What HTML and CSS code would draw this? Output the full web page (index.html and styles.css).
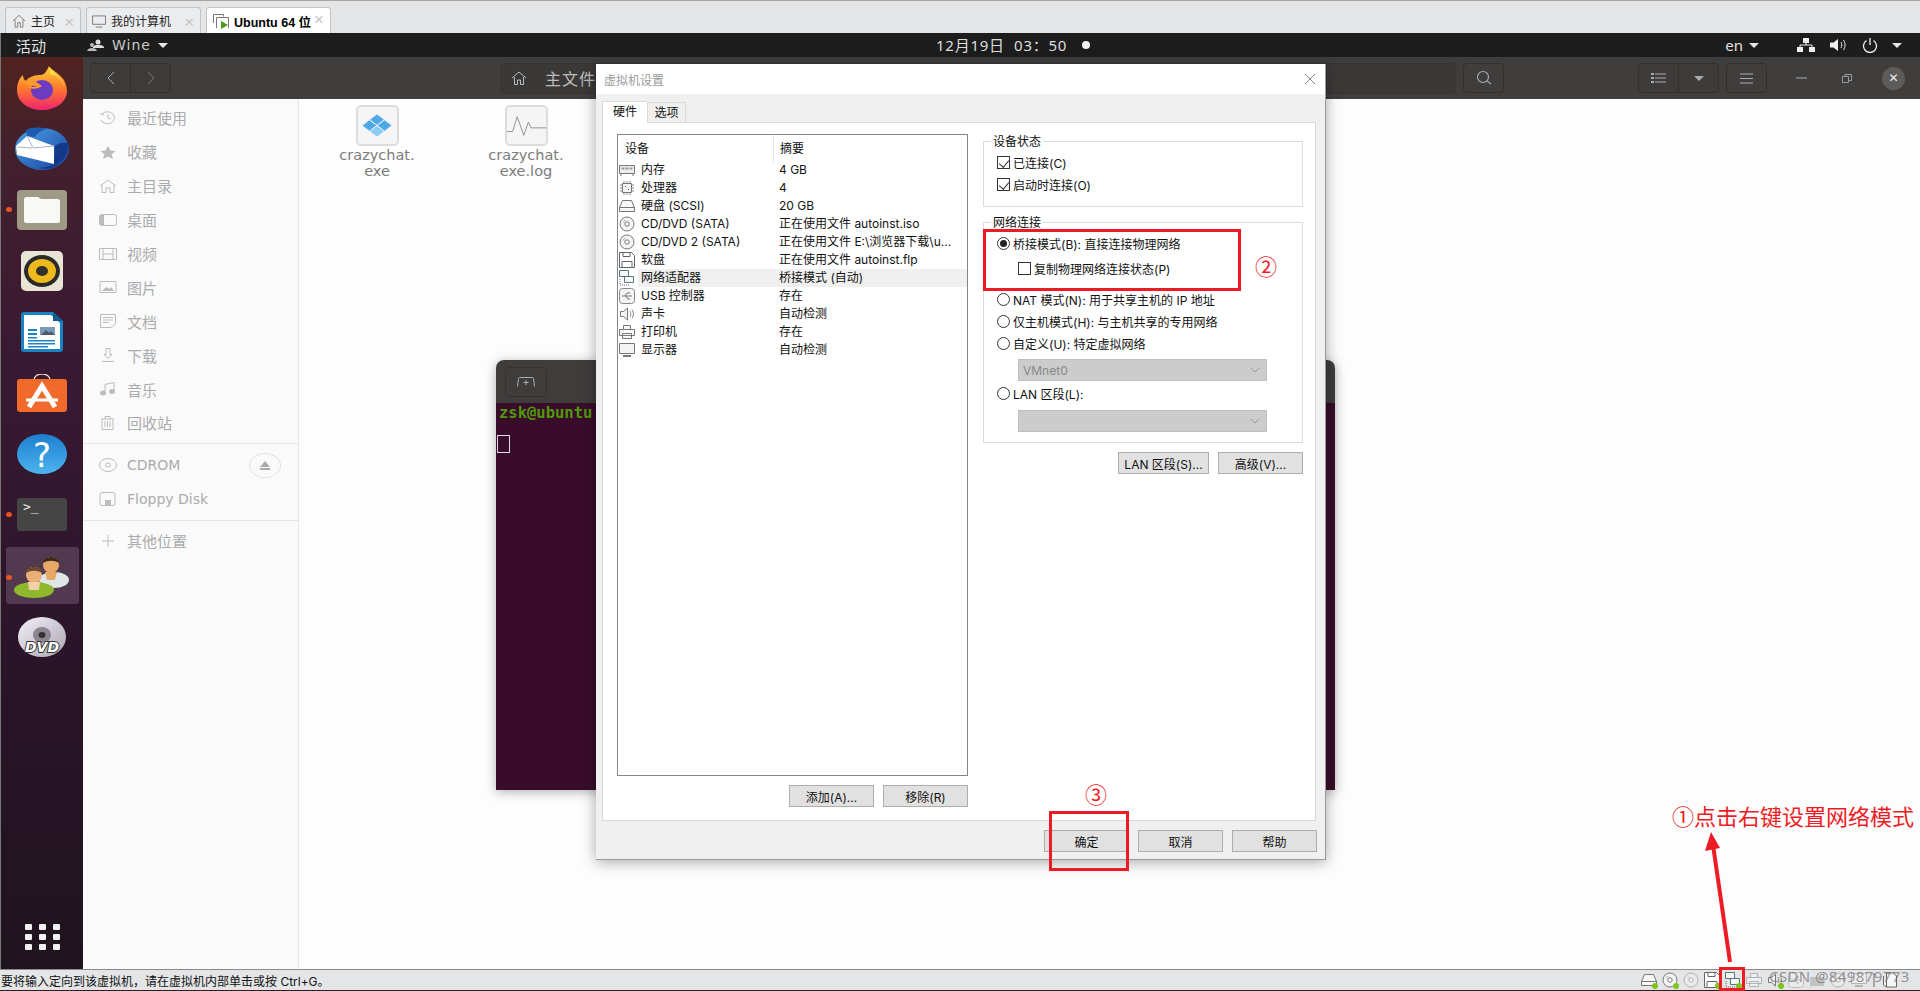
FILE: index.html
```html
<!DOCTYPE html>
<html lang="zh">
  <head>
    <meta charset="UTF-8" />
    <title>Ubuntu 64 位</title>
    <link rel="stylesheet" href="styles.css">
  </head>
  <body>
    <!-- iconos repetidos -->
    <svg class="defs" width="0" height="0">
      <symbol id="i-mem" viewBox="0 0 16 16"><path d="M.5 3.5h15v8H.5zM2 12v2M14 12v2" fill="#eee" stroke="#777"/><path d="M2.5 5.5h3v2h-3zM6.5 5.5h3v2h-3zM10.5 5.5h3v2h-3z" fill="#999"/></symbol>
      <symbol id="i-cpu" viewBox="0 0 16 16"><path d="M3.5 3.5h9v9h-9z" fill="#f4f4f4" stroke="#777"/><path d="M5 1v2M8 1v2M11 1v2M5 13v2M8 13v2M11 13v2M1 5h2M1 8h2M1 11h2M13 5h2M13 8h2M13 11h2" stroke="#888"/><path d="M6 6h1v1H6zM9 9h1v1H9z" fill="#555"/></symbol>
      <symbol id="i-disk" viewBox="0 0 16 16"><path d="M3.5 2.5h9l3 7v4H.5v-4z" fill="#f7f7f7" stroke="#777"/><path d="M.5 9.5h15" stroke="#777"/></symbol>
      <symbol id="i-cd" viewBox="0 0 16 16"><circle cx="8" cy="8" r="7" fill="#f4f4f4" stroke="#777"/><circle cx="8" cy="8" r="2.2" fill="#fff" stroke="#777"/><path d="M4 6.5 6 4" stroke="#aaa"/></symbol>
      <symbol id="i-floppy" viewBox="0 0 16 16"><path d="M.5.5h12l3 3v12H.5z" fill="#fff" stroke="#666"/><path d="M4 .5v4h7v-4M3 15.5v-6h10v6" fill="none" stroke="#666"/></symbol>
      <symbol id="i-net" viewBox="0 0 16 16"><path d="M.5.5h9v6h-9zM5.500 6.500h9v6h-9z" fill="#f6f6f6" stroke="#577"/><path d="M1 9v6h9" fill="none" stroke="#666" stroke-dasharray="1 1"/></symbol>
      <symbol id="i-usb" viewBox="0 0 16 16"><rect x=".5" y=".5" width="15" height="15" rx="3" fill="#f4f4f4" stroke="#888"/><path d="M3 8h10M6 8l2-3h3M7 8l2 3h2" fill="none" stroke="#777"/></symbol>
      <symbol id="i-sound" viewBox="0 0 16 16"><path d="M1.500 5.500h3l4-3.500v12l-4-3.500h-3z" fill="#f4f4f4" stroke="#777"/><path d="M11 5c1 2 1 4 0 6M13 3.500c2 3 2 6 0 9" fill="none" stroke="#888"/></symbol>
      <symbol id="i-print" viewBox="0 0 16 16"><path d="M4.500 1.500h7v4h-7zM.5 5.500h15v6h-15zM3.500 9.500h9v5h-9z" fill="#fafafa" stroke="#777"/></symbol>
      <symbol id="i-mon" viewBox="0 0 16 16"><path d="M.5 1.500h15v10H.5z" fill="#f4f4f4" stroke="#777"/><path d="M4 14h8" stroke="#777" stroke-width="2"/></symbol>
    </svg>

    <div class="screen">
      <!-- pestañas del programa -->
      <div class="tabstrip">
        <div class="hosttab tab-home">
          <svg width="14" height="14" viewBox="0 0 16 16"><path d="M1 8l7-6.500L15 8M3.500 6.500V15h3v-5h3v5h3V6.500" fill="none" stroke="#777"/></svg>
          <span>主页</span><b class="x">×</b>
        </div>
        <div class="hosttab tab-pc">
          <svg width="15" height="13" viewBox="0 0 16 14"><path d="M.5 1h14v9H.5zM4 13h7" fill="none" stroke="#777"/></svg>
          <span>我的计算机</span><b class="x">×</b>
        </div>
        <div class="hosttab active tab-vm">
          <svg width="16" height="15" viewBox="0 0 16 15"><path d="M.5 9V.5h10v2M3.500 14V3.500h12v10.500" fill="none" stroke="#777"/><path d="M8 7l7 4-7 4z" fill="#4a9b1a"/></svg>
          <span>Ubuntu 64 位</span><b class="x">×</b>
        </div>
      </div>

      <div class="vm">
        <!-- barra superior de gnome -->
        <div class="topbar">
          <span class="activities">活动</span>
          <div class="appmenu">
            <svg width="19" height="13" viewBox="0 0 19 13"><circle cx="12" cy="3" r="2.500" fill="#ddd"/><path d="M7 8c1-3 9-3 11 0v1H7z" fill="#ddd"/><circle cx="6" cy="6" r="2" fill="#bbb"/><path d="M1 12c1-4 9-4 10 0z" fill="#bbb"/></svg>
            <span>Wine</span><i class="caret"></i>
          </div>
          <div class="clock"><span>12月19日&nbsp; 03：50</span><i class="dot"></i></div>
          <div class="tray">
            <span class="lang">en</span><i class="caret"></i>
            <svg class="tray-net" width="18" height="14" viewBox="0 0 18 14"><path d="M6 0h6v5H6zM0 9h6v5H0zM12 9h6v5h-6z" fill="#eee"/><path d="M9 5v2M3 9V7h12v2" fill="none" stroke="#eee"/></svg>
            <svg class="tray-vol" width="17" height="14" viewBox="0 0 17 14"><path d="M0 4.500h3.500L8 1v12L3.500 9.500H0z" fill="#eee"/><path d="M11 4c1 2 1 4 0 6M13.500 2c2 3 2 7 0 10" fill="none" stroke="#eee"/></svg>
            <svg class="tray-pow" width="16" height="15" viewBox="0 0 16 15"><path d="M4.500 2.500a6.500 6.500 0 1 0 7 0M8 0v7" fill="none" stroke="#eee" stroke-width="1.300"/></svg>
            <i class="caret"></i>
          </div>
        </div>

        <div class="desk">
          <!-- dock -->
          <div class="dock">
            <div class="dock-item">
              <svg width="52" height="44" viewBox="0 0 52 44">
                <defs>
                  <linearGradient id="ff" x1="0" y1="0" x2="0" y2="1"><stop offset="0" stop-color="#ffd23a"/><stop offset=".5" stop-color="#ff7a2c"/><stop offset="1" stop-color="#f0236e"/></linearGradient>
                </defs>
                <path d="M33 0c2 5 18 9 18 25 0 11-11 19-25 19S1 36 1 24C1 17 4 11 7 9c0 3 1 5 3 6 3-5 10-6 15-6 3 0 6-4 8-9z" fill="url(#ff)"/>
                <path d="M34 2c3 5 13 10 15 20-3-8-8-13-15-14z" fill="#ffe14a"/>
                <ellipse cx="26" cy="24" rx="11" ry="10" fill="#6b3bc0"/>
                <path d="M7 16c6-3 13-1 19 4-4 3-10 4-14 1 4 0 7 0 9-1-5 0-10-1-14-4z" fill="#ff9a2c"/>
              </svg>
            </div>
            <div class="dock-item">
              <svg width="56" height="44" viewBox="0 0 56 44">
                <defs>
                  <linearGradient id="tb" x1="0" y1="0" x2="1" y2="1"><stop offset="0" stop-color="#4aa3e8"/><stop offset="1" stop-color="#1a3f9c"/></linearGradient>
                </defs>
                <ellipse cx="28" cy="22" rx="27" ry="21" fill="url(#tb)"/>
                <path d="M12 3c6-3 14-3 20-1-5 2-9 4-11 8l-8-1z" fill="#1c5bb0"/>
                <path d="M2 19 13 9l27 10v18L3 28z" fill="#fff"/>
                <path d="M13 9l6 12 21-2M3 20l15 1" fill="none" stroke="#aab4c8"/>
                <path d="M41 19c4-3 8-4 13-3 2 8-4 20-17 25-4 1-8 1-12 0 8-1 13-2 15-4z" fill="#14388a"/>
              </svg>
            </div>
            <div class="dock-item running">
              <svg width="50" height="40" viewBox="0 0 50 40">
                <rect width="50" height="40" rx="4" fill="#9e9a85"/>
                <path d="M7 9c0-1 1-2 2-2h12l3 2h17c1 0 2 1 2 2v20c0 1-1 2-2 2H9c-1 0-2-1-2-2z" fill="#f8f8f6"/>
              </svg>
            </div>
            <div class="dock-item">
              <svg width="42" height="40" viewBox="0 0 42 40">
                <rect width="42" height="40" rx="5" fill="#e9e5d6"/>
                <ellipse cx="21" cy="20" rx="18" ry="16" fill="#2a2a2a"/>
                <ellipse cx="21" cy="20" rx="14" ry="12" fill="#edb91c"/>
                <ellipse cx="21" cy="20" rx="6" ry="5" fill="#33302a"/>
              </svg>
            </div>
            <div class="dock-item">
              <svg width="42" height="40" viewBox="0 0 42 40">
                <path d="M3 0h29l10 9v28c0 2-1 3-3 3H3c-2 0-3-1-3-3V3C0 1 1 0 3 0z" fill="#1a83c4"/>
                <path d="M3 3h27l9 8v26H3z" fill="#fff"/>
                <path d="M32 0l10 9h-10z" fill="#0f5e8e"/>
                <path d="M7 17h9v2H7zM7 21h9v2H7zM7 25h9v1.500H7zM7 28h27v1.500H7zM7 31h27v1.500H7zM7 34h20v1.500H7z" fill="#1a83c4"/>
                <path d="M19 15h15v8H19z" fill="#7a9cb8"/>
                <path d="M20 23l5-5 3 3 2-2 4 4z" fill="#4a5a6a"/>
              </svg>
            </div>
            <div class="dock-item">
              <svg width="50" height="38" viewBox="0 0 50 38">
                <path d="M17 6c0-8 16-8 16 0" fill="none" stroke="#f0d6b8" stroke-width="1.500"/>
                <path d="M3 5h44c2 0 3 1 3 3v27c0 2-1 3-3 3H3c-2 0-3-1-3-3V8c0-2 1-3 3-3z" fill="#f26a2b"/>
                <path d="M12 33 25 12l13 21" fill="none" stroke="#fff" stroke-width="5"/>
                <path d="M9 26h32" stroke="#fff" stroke-width="3"/>
              </svg>
            </div>
            <div class="dock-item">
              <svg width="50" height="40" viewBox="0 0 50 40">
                <defs>
                  <linearGradient id="hp" x1="0" y1="0" x2="0" y2="1"><stop offset="0" stop-color="#1c7fd0"/><stop offset="1" stop-color="#4cb4ee"/></linearGradient>
                </defs>
                <ellipse cx="25" cy="20" rx="25" ry="20" fill="url(#hp)"/>
                <text x="25" y="33" class="help-mark">?</text>
              </svg>
            </div>
            <div class="dock-item running">
              <div class="term-icon">&gt;_</div>
            </div>
            <div class="dock-item running current">
              <svg width="56" height="44" viewBox="0 0 56 44">
                <ellipse cx="40" cy="26" rx="15" ry="8" fill="#dfe6e8"/>
                <circle cx="37" cy="11" r="8" fill="#e8a868"/>
                <path d="M29 9c1-8 15-8 16 0-5-3-11-3-16 0z" fill="#3a2a1c"/>
                <path d="M31 18h12l-2 8h-8z" fill="#e8a868"/>
                <ellipse cx="20" cy="36" rx="20" ry="8" fill="#8fb82c"/>
                <circle cx="20" cy="21" r="8" fill="#e8b078"/>
                <path d="M12 19c1-8 15-8 16 0-5-3-11-3-16 0z" fill="#6a4a2a"/>
                <path d="M14 28h12l-1 8h-10z" fill="#f4d0a8"/>
              </svg>
            </div>
            <div class="dock-item">
              <svg width="48" height="40" viewBox="0 0 48 40">
                <defs>
                  <linearGradient id="dv" x1="0" y1="0" x2="1" y2="1"><stop offset="0" stop-color="#f4f4f4"/><stop offset=".5" stop-color="#cfc9d8"/><stop offset="1" stop-color="#a8a8a8"/></linearGradient>
                </defs>
                <ellipse cx="24" cy="20" rx="24" ry="20" fill="url(#dv)"/>
                <ellipse cx="24" cy="18" rx="9" ry="8" fill="#8a8590"/>
                <ellipse cx="24" cy="18" rx="3.500" ry="3" fill="#333"/>
                <text x="24" y="35" class="dvd-mark">DVD</text>
              </svg>
            </div>
            <div class="apps-grid"><i></i><i></i><i></i><i></i><i></i><i></i><i></i><i></i><i></i></div>
          </div>

          <!-- ventana de archivos -->
          <div class="files">
            <div class="headerbar">
              <div class="btn-group nav-group">
                <span class="hb-btn"><svg width="8" height="14" viewBox="0 0 8 14"><path d="M7 1 1 7l6 6" fill="none" stroke="#aaa"/></svg></span>
                <span class="hb-btn"><svg width="8" height="14" viewBox="0 0 8 14"><path d="M1 1l6 6-6 6" fill="none" stroke="#777"/></svg></span>
              </div>
              <div class="pathbar">
                <svg width="16" height="14" viewBox="0 0 16 14"><path d="M1 7l7-6 7 6M3.500 6v7.500h3V9h3v4.500h3V6" fill="none" stroke="#bbb"/></svg>
                <span>主文件</span>
              </div>
              <span class="hb-btn single search-btn"><svg width="16" height="16" viewBox="0 0 16 16"><circle cx="7" cy="7" r="5.500" fill="none" stroke="#aaa" stroke-width="1.200"/><path d="M11 11l4 3" stroke="#aaa" stroke-width="1.200"/></svg></span>
              <div class="btn-group view-group">
                <span class="hb-btn"><svg width="15" height="12" viewBox="0 0 15 12"><path d="M0 1h3v2H0zM0 5h3v2H0zM0 9h3v2H0z" fill="#aaa"/><path d="M4 2h11M4 6h11M4 10h11" stroke="#aaa"/></svg></span>
                <span class="hb-btn"><i class="caret small"></i></span>
              </div>
              <span class="hb-btn single menu-btn"><svg width="13" height="11" viewBox="0 0 13 11"><path d="M0 1h13M0 5.500h13M0 10h13" stroke="#aaa"/></svg></span>
              <div class="win-ctl">
                <svg width="11" height="2" viewBox="0 0 11 2"><path d="M0 1h11" stroke="#888" stroke-width="1.500"/></svg>
                <svg width="10" height="9" viewBox="0 0 10 9"><path d="M.5 2.500h6v6h-6zM3 2.500V.5h6.500v6H7" fill="none" stroke="#999"/></svg>
                <span class="win-close">✕</span>
              </div>
            </div>
            <div class="files-body">
              <div class="sidebar">
                <div class="side-row"><svg class="si" viewBox="0 0 18 14"><path d="M3 3a7 6 0 1 1-1 6M1 2l2 2 2-1M9 3v4l3 1" fill="none"/></svg><span>最近使用</span></div>
                <div class="side-row"><svg class="si" viewBox="0 0 18 14"><path class="fill" d="M9 1l2.500 4.500 5 .5-4 3.500 1.500 4.500L9 11.500 4 14l1.500-4.500-4-3.500 5-.5z"/></svg><span>收藏</span></div>
                <div class="side-row"><svg class="si" viewBox="0 0 18 14"><path d="M1 7l8-6 8 6M3 6v7.500h4V9h4v4.500h4V6" fill="none"/></svg><span>主目录</span></div>
                <div class="side-row"><svg class="si" viewBox="0 0 18 14"><rect x=".5" y="1.500" width="17" height="11" rx="2" fill="none"/><path class="fill" d="M1 2h4v10H1z"/></svg><span>桌面</span></div>
                <div class="side-row"><svg class="si" viewBox="0 0 18 14"><path d="M.5 1.500h17v11H.5zM4 2v10M14 2v10M4 7h10" fill="none"/></svg><span>视频</span></div>
                <div class="side-row"><svg class="si" viewBox="0 0 18 14"><path d="M1 1.500h16v11H1z" fill="none"/><path class="fill" d="M3 11l4-4 3 2 2-2 3 4z"/></svg><span>图片</span></div>
                <div class="side-row"><svg class="si" viewBox="0 0 18 14"><path d="M1.500.5h15v9l-4 4h-11zM4 3.500h10M4 6h10M4 8.500h6" fill="none"/></svg><span>文档</span></div>
                <div class="side-row"><svg class="si" viewBox="0 0 18 14"><path d="M7 .5h4v6h2l-4 4-4-4h2zM3 13.500h12" fill="none"/></svg><span>下载</span></div>
                <div class="side-row"><svg class="si" viewBox="0 0 18 14"><path d="M6 11V2.500l9-2V9" fill="none"/><ellipse class="fill" cx="4" cy="11" rx="3" ry="2.500"/><ellipse class="fill" cx="13" cy="9.500" rx="3" ry="2.500"/></svg><span>音乐</span></div>
                <div class="side-row"><svg class="si" viewBox="0 0 18 14"><path d="M2 3h13M6 3V.5h5V3M3 3v10.500h11V3M6 5v6M8.500 5v6M11 5v6" fill="none"/></svg><span>回收站</span></div>
                <div class="side-sep first"></div>
                <div class="side-row">
                  <svg class="si" viewBox="0 0 18 14"><ellipse cx="9" cy="7" rx="8.500" ry="6.500" fill="none"/><ellipse cx="9" cy="7" rx="2.500" ry="2" fill="none"/></svg><span class="latin">CDROM</span>
                  <span class="eject"><svg width="10" height="9" viewBox="0 0 10 9"><path d="M5 0l5 6H0zM0 7h10v2H0z" fill="#aaa"/></svg></span>
                </div>
                <div class="side-row"><svg class="si" viewBox="0 0 18 14"><rect x="1" y=".5" width="15" height="13" rx="2" fill="none"/><path class="fill" d="M6 8h6v5H6z"/></svg><span class="latin">Floppy Disk</span></div>
                <div class="side-sep last"></div>
                <div class="side-row"><svg class="si" viewBox="0 0 18 14"><path d="M9 1v12M3 7h12" fill="none"/></svg><span>其他位置</span></div>
              </div>
              <div class="file-grid">
                <div class="file">
                  <div class="file-icon"><svg width="30" height="23" viewBox="0 0 30 23"><path d="M15 0l7.500 5.750L15 11.500 7.500 5.750zM7.500 5.750 15 11.500l-7.500 5.750L0 11.500zM22.500 5.750 30 11.500l-7.500 5.750L15 11.500z" fill="#4fa9e6" stroke="#f5f5f5" stroke-width=".8"/><path d="M15 11.500l7.500 5.750L15 23l-7.500-5.750z" fill="#8accf4" stroke="#f5f5f5" stroke-width=".8"/></svg></div>
                  <span>crazychat.<br>exe</span>
                </div>
                <div class="file">
                  <div class="file-icon"><svg width="42" height="24" viewBox="0 0 42 24"><path d="M0 18h6L11 2l7 20 5-14 3 6 16 0" fill="none" stroke="#8a8a8a"/></svg></div>
                  <span>crazychat.<br>exe.log</span>
                </div>
              </div>
            </div>
          </div>
        </div>
      </div>

      <!-- barra de estado -->
      <div class="statusbar">
        <span>要将输入定向到该虚拟机，请在虚拟机内部单击或按 Ctrl+G。</span>
        <div class="status-icons">
          <span class="st on"><svg width="16" height="16"><use href="#i-disk"/></svg></span>
          <span class="st on"><svg width="16" height="16"><use href="#i-cd"/></svg></span>
          <span class="st off"><svg width="16" height="16"><use href="#i-cd"/></svg></span>
          <span class="st on"><svg width="16" height="16"><use href="#i-floppy"/></svg></span>
          <span class="st on"><svg width="16" height="16"><use href="#i-net"/></svg></span>
          <span class="st off"><svg width="16" height="16"><use href="#i-print"/></svg></span>
          <span class="st on"><svg width="16" height="16"><use href="#i-sound"/></svg></span>
          <span class="st off"><svg width="16" height="16"><use href="#i-usb"/></svg></span>
          <span class="st off"><svg width="16" height="16"><path d="M1 5h14v9H1z" fill="#999"/></svg></span>
          <span class="st off"><svg width="16" height="16"><use href="#i-cd"/></svg></span>
          <span class="st off"><svg width="16" height="16"><use href="#i-mon"/></svg></span>
          <span class="st thin"><svg width="6" height="16"><path d="M3 1v14" stroke="#666"/></svg></span>
          <span class="st"><svg width="16" height="16" viewBox="0 0 16 16"><path d="M4.500 1h7l3 3v11h-10zM1.500 4v9l3 2" fill="#f6f6f6" stroke="#666"/></svg></span>
        </div>
      </div>

      <!-- terminal detrás del diálogo -->
      <div class="terminal">
        <div class="term-head">
          <span class="term-tab"><svg width="18" height="10" viewBox="0 0 18 10"><path d="M.5 9.500l1-8q0-1 1-1h13q1 0 1 1l1 8M9 3v5M6.500 5.500h5" fill="none" stroke="#aaa"/></svg></span>
        </div>
        <div class="term-body">
          <div class="prompt">zsk@ubuntu</div>
          <div class="cursor"></div>
        </div>
      </div>

      <!-- diálogo de configuración -->
      <div class="dialog">
        <div class="dialog-title">
          <span>虚拟机设置</span>
          <svg width="12" height="12" viewBox="0 0 12 12"><path d="M1 1l10 10M11 1 1 11" stroke="#888"/></svg>
        </div>
        <div class="dialog-tabs">
          <span class="dtab on">硬件</span>
          <span class="dtab">选项</span>
        </div>
        <div class="tab-panel">
          <div class="left-col">
            <div class="device-list">
              <div class="device-head"><span>设备</span><span>摘要</span></div>
              <div class="device"><svg width="16" height="16"><use href="#i-mem"/></svg><span class="d-name">内存</span><span>4 GB</span></div>
              <div class="device"><svg width="16" height="16"><use href="#i-cpu"/></svg><span class="d-name">处理器</span><span>4</span></div>
              <div class="device"><svg width="16" height="16"><use href="#i-disk"/></svg><span class="d-name">硬盘 (SCSI)</span><span>20 GB</span></div>
              <div class="device"><svg width="16" height="16"><use href="#i-cd"/></svg><span class="d-name">CD/DVD (SATA)</span><span>正在使用文件 autoinst.iso</span></div>
              <div class="device"><svg width="16" height="16"><use href="#i-cd"/></svg><span class="d-name">CD/DVD 2 (SATA)</span><span>正在使用文件 E:\浏览器下载\u...</span></div>
              <div class="device"><svg width="16" height="16"><use href="#i-floppy"/></svg><span class="d-name">软盘</span><span>正在使用文件 autoinst.flp</span></div>
              <div class="device selected"><svg width="16" height="16"><use href="#i-net"/></svg><span class="d-name">网络适配器</span><span>桥接模式 (自动)</span></div>
              <div class="device"><svg width="16" height="16"><use href="#i-usb"/></svg><span class="d-name">USB 控制器</span><span>存在</span></div>
              <div class="device"><svg width="16" height="16"><use href="#i-sound"/></svg><span class="d-name">声卡</span><span>自动检测</span></div>
              <div class="device"><svg width="16" height="16"><use href="#i-print"/></svg><span class="d-name">打印机</span><span>存在</span></div>
              <div class="device"><svg width="16" height="16"><use href="#i-mon"/></svg><span class="d-name">显示器</span><span>自动检测</span></div>
            </div>
            <div class="btn-row list-btns">
              <button class="win-btn">添加(A)...</button>
              <button class="win-btn">移除(R)</button>
            </div>
          </div>

          <div class="right-col">
            <div class="group group-state">
              <span class="group-title">设备状态</span>
              <div class="opt"><i class="check on"></i>已连接(C)</div>
              <div class="opt"><i class="check on"></i>启动时连接(O)</div>
            </div>
            <div class="group group-net">
              <span class="group-title">网络连接</span>
              <div class="opt"><i class="radio on"></i>桥接模式(B): 直接连接物理网络</div>
              <div class="opt sub"><i class="check"></i>复制物理网络连接状态(P)</div>
              <div class="opt nat"><i class="radio"></i>NAT 模式(N): 用于共享主机的 IP 地址</div>
              <div class="opt"><i class="radio"></i>仅主机模式(H): 与主机共享的专用网络</div>
              <div class="opt"><i class="radio"></i>自定义(U): 特定虚拟网络</div>
              <div class="combo combo-a"><span>VMnet0</span><svg width="10" height="6" viewBox="0 0 10 6"><path d="M1 1l4 4 4-4" fill="none" stroke="#999"/></svg></div>
              <div class="opt lan"><i class="radio"></i>LAN 区段(L):</div>
              <div class="combo combo-b"><span></span><svg width="10" height="6" viewBox="0 0 10 6"><path d="M1 1l4 4 4-4" fill="none" stroke="#999"/></svg></div>
            </div>
            <div class="btn-row net-btns">
              <button class="win-btn lan-btn">LAN 区段(S)...</button>
              <button class="win-btn">高级(V)...</button>
            </div>
          </div>
        </div>
        <div class="btn-row dialog-btns">
          <button class="win-btn">确定</button>
          <button class="win-btn">取消</button>
          <button class="win-btn">帮助</button>
        </div>
      </div>

      <!-- anotaciones en rojo -->
      <div class="mark mark-bridge"></div>
      <div class="mark mark-ok"></div>
      <div class="mark mark-net"></div>
      <span class="note note-2">②</span>
      <span class="note note-3">③</span>
      <span class="note note-1">①点击右键设置网络模式</span>
      <svg class="arrow" width="40" height="140" viewBox="0 0 40 140">
        <path d="M28 133 11 16" stroke="#ed1c24" stroke-width="4" fill="none"/>
        <path d="M9 3 3 22l15-3z" fill="#ed1c24"/>
      </svg>
      <span class="watermark">CSDN @849879773</span>
    </div>
  </body>
</html>
```

FILE: styles.css
```css
* {
  box-sizing: border-box;
}
body {
  margin: 0;
  font-family: "Noto Sans", "Noto Sans CJK SC", sans-serif;
  font-size: 12px;
  color: #111;
  background: #fff;
  overflow: hidden;
}
.defs {
  position: absolute;
}
.screen {
  position: relative;
  width: 1920px;
  height: 991px;
  display: flex;
  flex-direction: column;
  overflow: hidden;
}

/* pestañas */
.tabstrip {
  height: 33px;
  flex: none;
  display: flex;
  gap: 5px;
  padding: 6px 0 0 5px;
  background: #e4e5e7;
  border-top: 1px solid #a5a5a5;
}
.hosttab {
  position: relative;
  height: 27px;
  display: flex;
  align-items: center;
  gap: 5px;
  padding-left: 6px;
  font-size: 12px;
  color: #222;
  background: #ebecee;
  border: 1px solid #c2c3c5;
  border-bottom: none;
  border-radius: 3px 3px 0 0;
}
.tab-home {
  width: 76px;
}
.tab-pc {
  width: 115px;
  gap: 4px;
  padding-left: 5px;
}
.tab-vm {
  width: 125px;
  gap: 5px;
  font-family: "Liberation Sans", "Noto Sans CJK SC", sans-serif;
  font-size: 12.5px;
}
.hosttab.active {
  background: #fff;
  font-weight: bold;
  color: #000;
}
.x {
  position: absolute;
  right: 6px;
  top: 2px;
  font-size: 17px;
  font-weight: normal;
  color: #c4c4c4;
}

/* zona de la máquina virtual */
.vm {
  flex: 1;
  min-height: 0;
  display: flex;
  flex-direction: column;
  border-left: 1px solid #777;
}
.topbar {
  height: 24px;
  flex: none;
  position: relative;
  display: flex;
  align-items: center;
  background: #1d1d1d;
  color: #e2e2e2;
  font-size: 15px;
}
.activities {
  margin-left: 15px;
  font-size: 15px;
}
.appmenu {
  margin-left: 40px;
  display: flex;
  align-items: center;
  gap: 7px;
  color: #c8c8c8;
  font-family: "DejaVu Sans", sans-serif;
  font-size: 14px;
  letter-spacing: 1px;
}
.caret {
  display: inline-block;
  width: 0;
  height: 0;
  border-left: 5.5px solid transparent;
  border-right: 5.5px solid transparent;
  border-top: 5px solid #e6e6e6;
}
.caret.small {
  border-top-color: #aaa;
}
.clock {
  position: absolute;
  left: 935px;
  top: 1px;
  display: flex;
  align-items: center;
  gap: 15px;
  font-size: 15px;
  letter-spacing: 0.75px;
  color: #ddd;
}
.dot {
  width: 8px;
  height: 8px;
  border-radius: 50%;
  background: #f2f2f2;
}
.tray {
  margin-left: auto;
  display: flex;
  align-items: center;
  padding-right: 18px;
}
.lang {
  font-size: 15px;
  margin-right: 6px;
}
.tray-net {
  margin-left: 38px;
}
.tray-vol {
  margin-left: 15px;
}
.tray-pow {
  margin-left: 15px;
  margin-right: 14px;
}
.desk {
  flex: 1;
  min-height: 0;
  display: flex;
}

/* dock */
.dock {
  width: 82px;
  flex: none;
  display: flex;
  flex-direction: column;
  align-items: center;
  background: linear-gradient(#50231f 0, #43202c 10%, #3a1a33 32%, #2b1429 65%, #1f141e 100%);
}
.dock-item {
  position: relative;
  width: 73px;
  height: 61px;
  flex: none;
  display: flex;
  align-items: center;
  justify-content: center;
}
.dock-item.running::before {
  content: "";
  position: absolute;
  left: 0;
  top: 28px;
  width: 6px;
  height: 5px;
  border-radius: 50%;
  background: #e9541f;
}
.dock-item.current {
  height: 57px;
  margin: 2px 0;
  border-radius: 3px;
  background: #52394f;
}
.help-mark {
  font-family: "DejaVu Sans", sans-serif;
  font-size: 34px;
  fill: #fff;
  text-anchor: middle;
}
.dvd-mark {
  font-family: "DejaVu Sans", sans-serif;
  font-size: 14px;
  font-weight: bold;
  font-style: italic;
  fill: #fff;
  stroke: #333;
  stroke-width: 2px;
  paint-order: stroke;
  text-anchor: middle;
}
.term-icon {
  width: 50px;
  height: 33px;
  padding: 0 0 0 6px;
  border-radius: 3px;
  background: #454545;
  color: #e8e8e8;
  font-family: "DejaVu Sans Mono", monospace;
  font-size: 13px;
  line-height: 18px;
}
.apps-grid {
  margin-top: auto;
  margin-bottom: 19px;
  display: grid;
  grid-template-columns: repeat(3, 7px);
  gap: 4px 7px;
}
.apps-grid i {
  height: 6px;
  border-radius: 1px;
  background: #f0f0f0;
}

/* archivos */
.files {
  flex: 1;
  min-width: 0;
  display: flex;
  flex-direction: column;
}
.headerbar {
  height: 42px;
  flex: none;
  display: flex;
  align-items: center;
  background: #403d3d;
  padding-left: 7px;
}
.btn-group {
  display: flex;
  height: 30px;
  border: 1px solid #333130;
  border-radius: 4px;
  background: #3e3b3b;
}
.hb-btn {
  display: flex;
  align-items: center;
  justify-content: center;
}
.nav-group {
  width: 81px;
}
.nav-group .hb-btn {
  flex: 1;
}
.nav-group .hb-btn + .hb-btn,
.view-group .hb-btn + .hb-btn {
  border-left: 1px solid #333130;
}
.pathbar {
  width: 956px;
  height: 31px;
  margin-left: 329px;
  padding-left: 10px;
  display: flex;
  align-items: center;
  gap: 18px;
  border: 1px solid #383535;
  border-radius: 4px;
  background: #3b3838;
  color: #bdbdbd;
  font-size: 16px;
  letter-spacing: 1px;
}
.single {
  height: 30px;
  border: 1px solid #333130;
  border-radius: 4px;
}
.search-btn {
  width: 41px;
  margin-left: 7px;
}
.view-group {
  width: 81px;
  margin-left: 134px;
}
.view-group .hb-btn {
  flex: 1;
}
.menu-btn {
  width: 41px;
  margin-left: 7px;
}
.win-ctl {
  display: flex;
  align-items: center;
  margin-left: 29px;
}
.win-ctl svg + svg {
  margin-left: 35px;
}
.win-close {
  width: 23px;
  height: 23px;
  margin-left: 30px;
  display: flex;
  align-items: center;
  justify-content: center;
  border-radius: 50%;
  background: #5e5b5b;
  color: #eee;
  font-family: "DejaVu Sans", sans-serif;
  font-size: 12px;
}
.files-body {
  flex: 1;
  min-height: 0;
  display: flex;
  background: #fdfdfd;
}
.sidebar {
  width: 216px;
  flex: none;
  padding-top: 2px;
  background: #fafafa;
  border-right: 1px solid #e6e6e6;
  color: #ababab;
  font-size: 15px;
}
.side-row {
  position: relative;
  height: 33.9px;
  display: flex;
  align-items: center;
  padding-left: 16px;
  gap: 10px;
}
.si {
  width: 18px;
  height: 14px;
  flex: none;
  stroke: #bcbcbc;
}
.si .fill {
  fill: #bcbcbc;
  stroke: none;
}
.latin {
  font-family: "DejaVu Sans", sans-serif;
  font-size: 14px;
}
.side-sep {
  height: 1px;
  margin: 3px 0;
  background: #e4e4e4;
}
.side-sep.first {
  margin-top: 3px;
  margin-bottom: 4px;
}
.side-sep.last {
  margin-top: 4px;
  margin-bottom: 3px;
}
.eject {
  position: absolute;
  right: 17px;
  top: 5px;
  width: 32px;
  height: 25px;
  display: flex;
  align-items: center;
  justify-content: center;
  border: 1px solid #e2e2e2;
  border-radius: 50%;
}
.file-grid {
  display: flex;
  gap: 67px;
  padding: 6px 0 0 37px;
}
.file {
  width: 82px;
  display: flex;
  flex-direction: column;
  align-items: center;
  color: #7c7c7c;
  font-family: "DejaVu Sans", sans-serif;
  font-size: 14.5px;
  line-height: 15.5px;
  text-align: center;
}
.file-icon {
  width: 43px;
  height: 41px;
  margin-bottom: 2px;
  display: flex;
  align-items: center;
  justify-content: center;
  border: 2px solid #dcdcdc;
  border-radius: 5px;
  background: #f5f5f5;
}

/* estado */
.statusbar {
  height: 22px;
  flex: none;
  display: flex;
  align-items: center;
  justify-content: space-between;
  padding-left: 1px;
  background: #e4e5e7;
  border-top: 1px solid #8a8a8a;
  border-bottom: 1px solid #222;
  font-family: Inter, "Noto Sans CJK SC", sans-serif;
  font-size: 12px;
}
.status-icons {
  display: flex;
  align-items: center;
  padding-right: 20px;
}
.st {
  position: relative;
  width: 21px;
  height: 16px;
  display: flex;
  justify-content: center;
}
.st.thin {
  width: 10px;
}
.st.off {
  opacity: 0.45;
}
.st.on::after {
  content: "";
  position: absolute;
  right: 1px;
  bottom: -1px;
  width: 6px;
  height: 6px;
  border-radius: 50%;
  background: #7dc41c;
}

/* terminal */
.terminal {
  position: absolute;
  left: 496px;
  top: 360px;
  width: 839px;
  height: 430px;
  display: flex;
  flex-direction: column;
  border-radius: 8px 8px 0 0;
  overflow: hidden;
  box-shadow: 0 2px 12px rgba(0, 0, 0, 0.3);
}
.term-head {
  height: 43px;
  flex: none;
  padding: 7px 0 0 9px;
  background: #3f3d3c;
}
.term-tab {
  width: 42px;
  height: 30px;
  display: flex;
  align-items: center;
  justify-content: center;
  border: 1px solid #343231;
  border-radius: 5px;
}
.term-body {
  flex: 1;
  background: #380c2a;
}
.prompt {
  padding: 1px 0 0 3px;
  color: #4e9a06;
  font-family: "DejaVu Sans Mono", monospace;
  font-weight: bold;
  font-size: 15.5px;
  line-height: 18px;
}
.cursor {
  width: 13px;
  height: 18px;
  margin: 13px 0 0 1px;
  border: 1px solid #ddd;
}

/* diálogo */
.dialog {
  position: absolute;
  left: 596px;
  top: 64px;
  width: 730px;
  height: 796px;
  display: flex;
  flex-direction: column;
  background: #f0f0f0;
  border-right: 1px solid #9a9a9a;
  border-bottom: 1px solid #9a9a9a;
  box-shadow: 0 2px 14px rgba(0, 0, 0, 0.35);
  font-family: Inter, "Noto Sans CJK SC", sans-serif;
}
.dialog-title {
  height: 30px;
  flex: none;
  display: flex;
  align-items: center;
  justify-content: space-between;
  padding: 0 9px 0 8px;
  background: #fff;
  color: #9a9a9a;
}
.dialog-tabs {
  height: 28px;
  flex: none;
  display: flex;
  align-items: flex-end;
  padding-left: 6px;
}
.dtab {
  width: 39px;
  height: 20px;
  text-align: center;
  line-height: 20px;
  background: #f0f0f0;
  border: 1px solid #d9d9d9;
  border-bottom: none;
}
.dtab.on {
  width: 45px;
  height: 22px;
  margin-bottom: -1px;
  background: #fff;
  border-right: none;
  position: relative;
  z-index: 1;
}
.tab-panel {
  width: 714px;
  height: 699px;
  margin-left: 6px;
  flex: none;
  display: flex;
  padding: 11px 0 0 14px;
  background: #fff;
  border: 1px solid #d9d9d9;
}
.left-col {
  width: 351px;
  flex: none;
}
.device-list {
  width: 351px;
  height: 642px;
  border: 1px solid #82878f;
  background: #fff;
}
.device-head {
  height: 26px;
  display: grid;
  grid-template-columns: 148px 1fr;
  line-height: 28px;
  padding-left: 7px;
}
.device-head span + span {
  padding-left: 6px;
  border-left: 1px solid #e6e6e6;
}
.device {
  height: 18px;
  display: grid;
  grid-template-columns: 16px 144px 1fr;
  align-items: center;
  padding-left: 1px;
  line-height: 18px;
  white-space: nowrap;
}
.d-name {
  padding-left: 6px;
}
.device.selected {
  background: linear-gradient(90deg, #fff 20px, #f0f0f0 20px);
}
.btn-row {
  display: flex;
  justify-content: flex-end;
}
.win-btn {
  width: 85px;
  height: 22px;
  padding: 0;
  font: inherit;
  color: #111;
  background: #e1e1e1;
  border: 1px solid #adadad;
}
.list-btns {
  margin-top: 9px;
  gap: 9px;
}
.right-col {
  width: 320px;
  margin-left: 15px;
  padding-top: 7px;
  flex: none;
}
.group {
  position: relative;
  padding-left: 13px;
  border: 1px solid #dcdcdc;
}
.group-title {
  position: absolute;
  left: 7px;
  top: -8px;
  padding: 0 2px;
  line-height: 16px;
  background: #fff;
}
.group-state {
  height: 66px;
  padding-top: 10px;
}
.group-net {
  height: 221px;
  margin-top: 15px;
  padding-top: 10px;
}
.opt {
  height: 22px;
  padding-bottom: 1px;
  display: flex;
  align-items: center;
  gap: 3px;
  white-space: nowrap;
}
.opt.sub {
  margin: 3px 0 0 21px;
}
.opt.nat {
  margin-top: 9px;
}
.opt.lan {
  margin-top: 2px;
}
.check {
  position: relative;
  width: 13px;
  height: 13px;
  flex: none;
  border: 1px solid #333;
  background: #fff;
}
.check.on::after {
  content: "";
  position: absolute;
  left: 3px;
  top: 1px;
  width: 5px;
  height: 8px;
  border: solid #333;
  border-width: 0 1px 1px 0;
  transform: rotate(40deg);
}
.radio {
  position: relative;
  width: 13px;
  height: 13px;
  flex: none;
  border: 1px solid #333;
  border-radius: 50%;
  background: #fff;
}
.radio.on::after {
  content: "";
  position: absolute;
  left: 2px;
  top: 2px;
  width: 7px;
  height: 7px;
  border-radius: 50%;
  background: #222;
}
.combo {
  width: 249px;
  height: 22px;
  margin-left: 21px;
  padding: 0 6px 0 4px;
  display: flex;
  align-items: center;
  justify-content: space-between;
  background: #cccccc;
  border: 1px solid #bfbfbf;
  color: #888;
}
.combo-a {
  margin-top: 4px;
}
.combo-b {
  margin-top: 5px;
}
.net-btns {
  margin-top: 9px;
  gap: 9px;
}
.lan-btn {
  width: 91px;
}
.dialog-btns {
  margin-top: 9px;
  padding-right: 8px;
  gap: 9px;
}

/* anotaciones */
.mark {
  position: absolute;
  border: 3px solid #ed1c24;
}
.mark-bridge {
  left: 983px;
  top: 229px;
  width: 258px;
  height: 62px;
}
.mark-ok {
  left: 1049px;
  top: 811px;
  width: 80px;
  height: 60px;
}
.mark-net {
  left: 1719px;
  top: 967px;
  width: 26px;
  height: 24px;
}
.note {
  position: absolute;
  color: #ed1c24;
  font-family: "Noto Sans CJK SC", sans-serif;
  line-height: 1;
}
.note-2 {
  left: 1255px;
  top: 254px;
  font-size: 22px;
}
.note-3 {
  left: 1085px;
  top: 782px;
  font-size: 22px;
}
.note-1 {
  left: 1672px;
  top: 804px;
  font-size: 22px;
  white-space: nowrap;
}
.arrow {
  position: absolute;
  left: 1702px;
  top: 829px;
}
.watermark {
  position: absolute;
  left: 1769px;
  top: 966px;
  color: rgba(110, 110, 110, 0.7);
  font-size: 15px;
  letter-spacing: 0.4px;
  white-space: nowrap;
}
```
